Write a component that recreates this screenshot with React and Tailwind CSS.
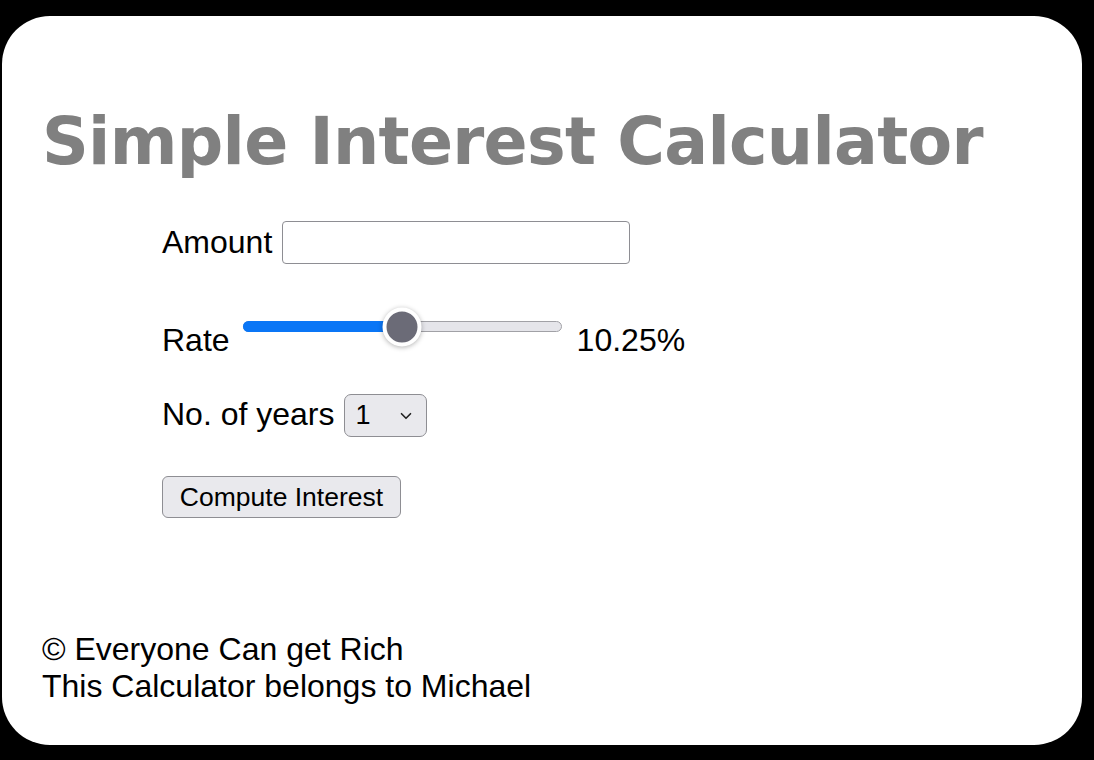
import { ChevronDown } from 'lucide-react'

const body = { fontFamily: '"Liberation Sans", Arial, sans-serif' }

// static picture of a range input, value at 50%
const RateSlider = () => (
    <div className="relative w-[319px] h-[11px] ml-[13px] -mt-[1px]">
        <div className="absolute inset-0 rounded-full bg-[#e5e5ea] border border-[#a1a1a6]" />
        <div className="absolute left-0 top-0 h-full w-1/2 rounded-full bg-[#0a76f6]" />
        <div className="absolute left-1/2 top-1/2 -translate-x-1/2 -translate-y-1/2 w-[39px] h-[39px] rounded-full bg-[#6b6b77] border-[4px] border-white shadow-[0_1px_5px_rgba(0,0,0,0.3)]" />
    </div>
)

const App = () => {
    return (
        <div className="w-[1094px] h-[760px] bg-black pt-[16px] pl-[2px]" style={body}>
            <div className="w-[1080px] h-[729px] bg-white rounded-[48px] px-[40px] pt-[93px] text-black">
                {/* Title */}
                <h1
                    className="text-[65px] leading-none font-bold text-[#808080] tracking-[-0.7px]"
                    style={{ fontFamily: '"DejaVu Sans", Verdana, sans-serif' }}
                >
                    Simple Interest Calculator
                </h1>

                {/* Form */}
                <div className="ml-[120px] text-[32px] leading-[37px]">
                    <div className="flex items-center gap-[10px] mt-[47px] h-[43px]">
                        <span>Amount</span>
                        <input
                            type="text"
                            className="w-[348px] h-[43px] border-[1.5px] border-[#8e8e93] rounded-[4px] bg-white outline-none"
                        />
                    </div>

                    <div className="flex items-start mt-[58px] h-[37px]">
                        <span>Rate</span>
                        <RateSlider />
                        <span className="ml-[15px]">10.25%</span>
                    </div>

                    <div className="flex items-center gap-[9px] mt-[35px] h-[43px]">
                        <span className="mb-[2px]">No. of years</span>
                        <div className="w-[83px] h-[43px] border-[1.5px] border-[#8e8e93] rounded-[7px] bg-[#e9e9ed] flex items-center justify-between pl-[11px] pr-[11px] text-[27px]">
                            <span>1</span>
                            <ChevronDown size={18} strokeWidth={2.2} className="text-[#222]" />
                        </div>
                    </div>

                    <button className="mt-[39px] w-[239px] h-[42px] border-[1.5px] border-[#8e8e93] rounded-[6px] bg-[#e9e9ed] text-[26.5px] leading-none text-black flex items-center justify-center">
                        Compute Interest
                    </button>
                </div>

                {/* Footer */}
                <div className="mt-[113px] text-[32px] leading-[37px]">
                    <p>© Everyone Can get Rich</p>
                    <p>This Calculator belongs to Michael</p>
                </div>
            </div>
        </div>
    )
}

export default App
